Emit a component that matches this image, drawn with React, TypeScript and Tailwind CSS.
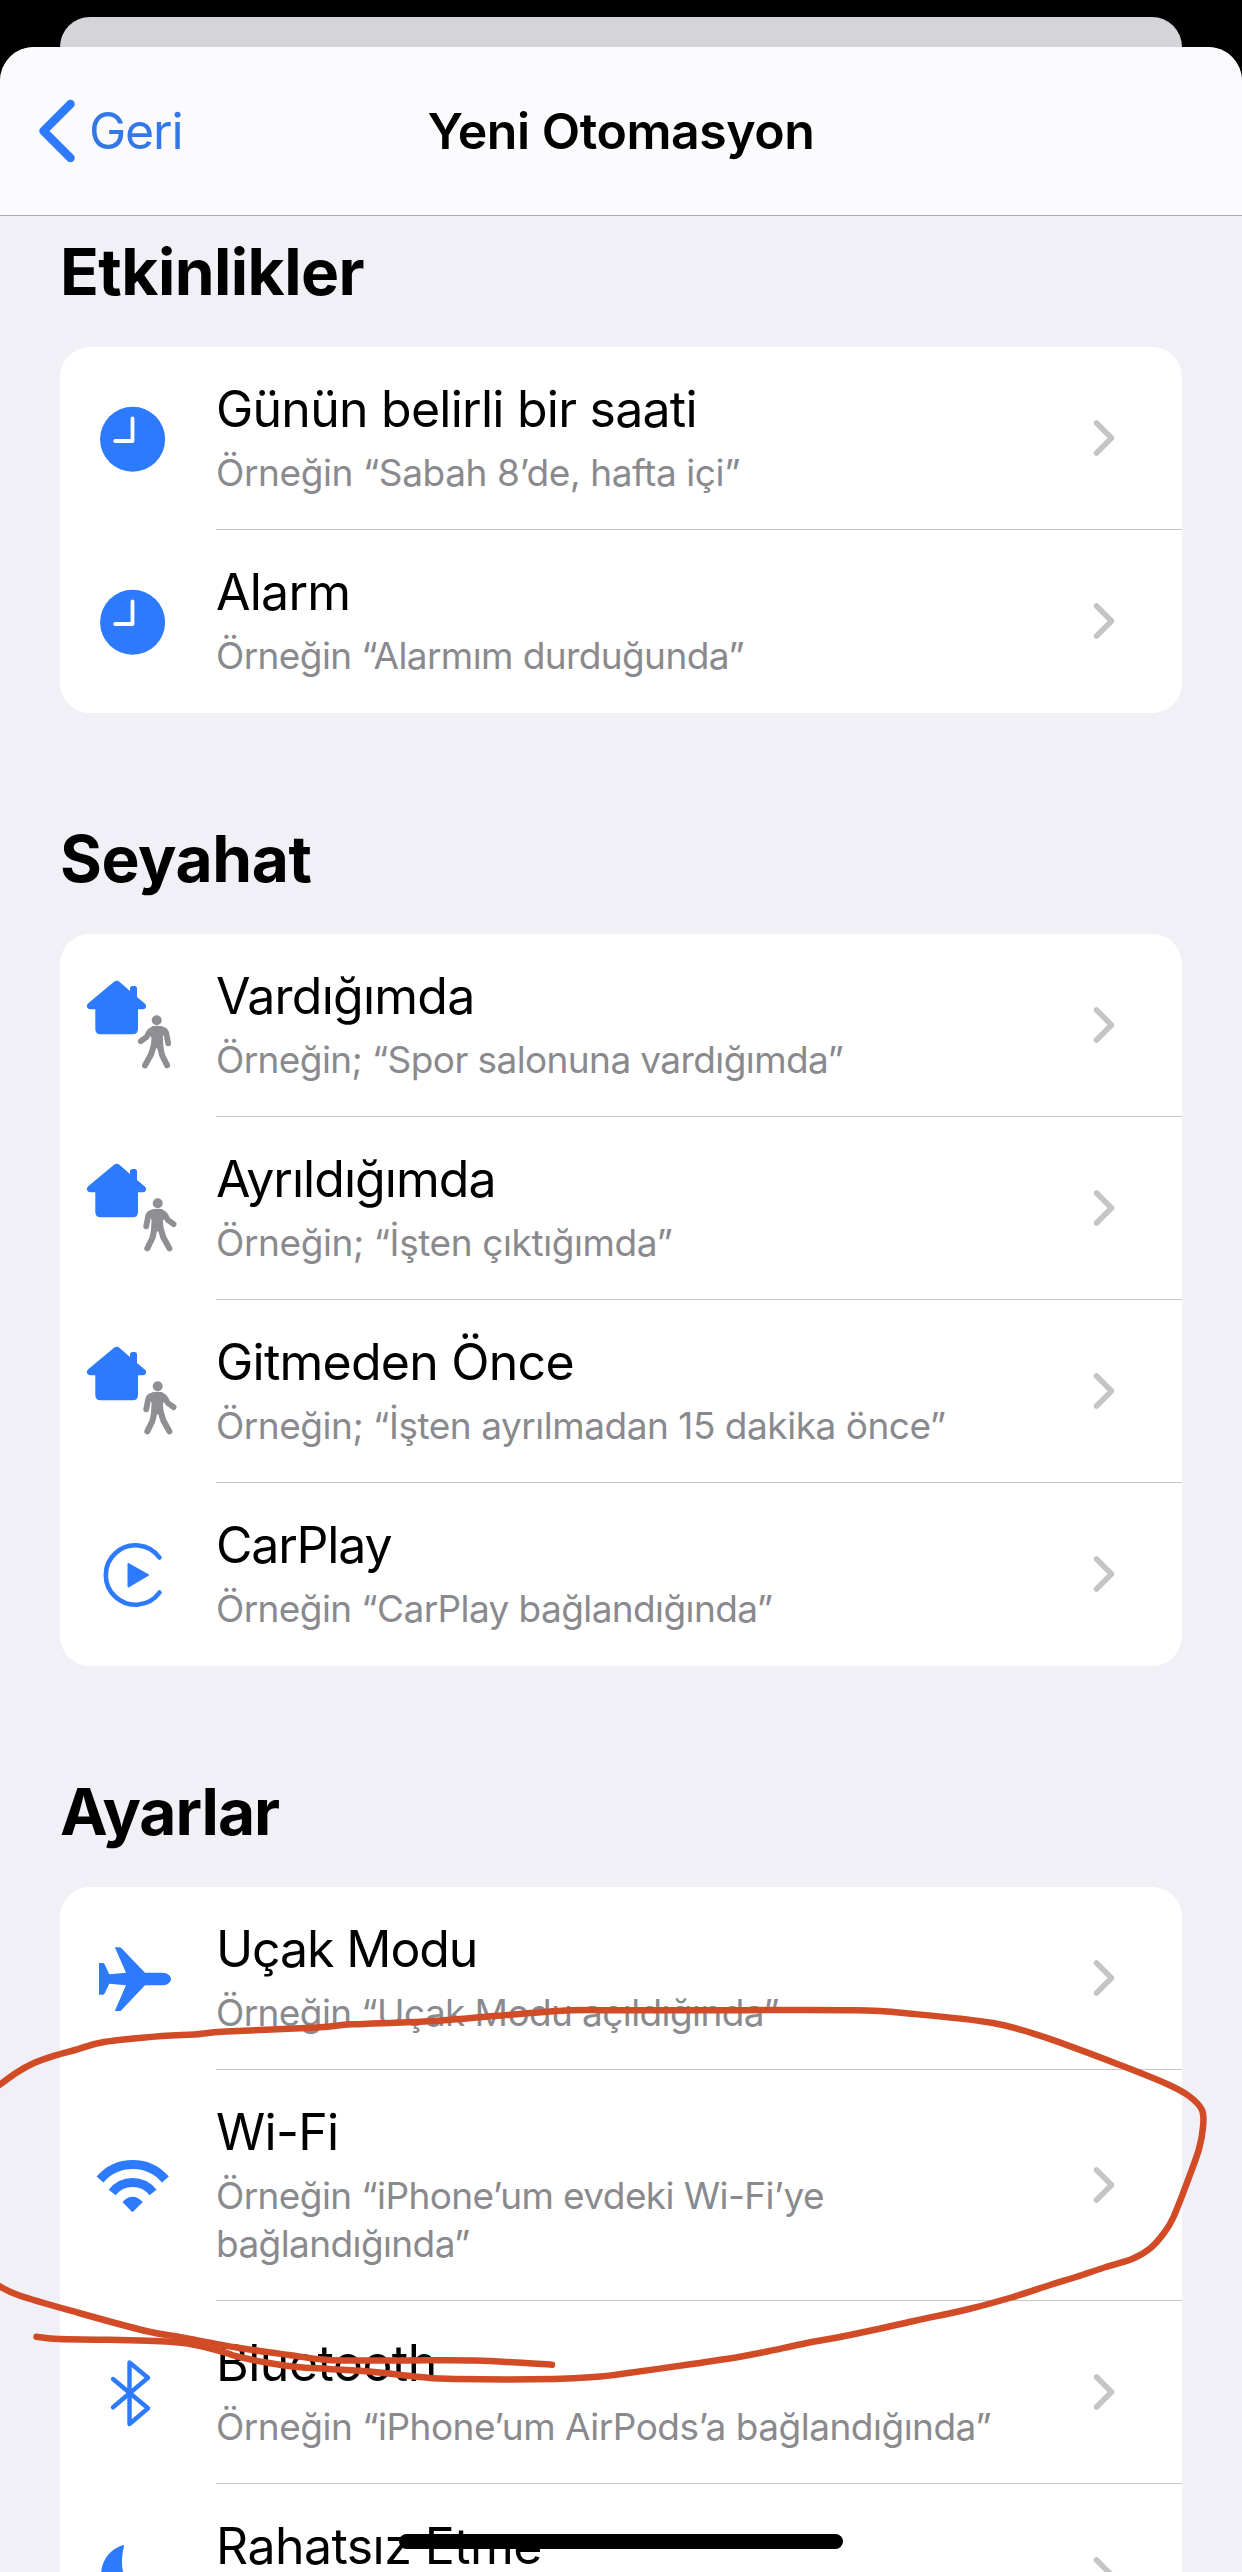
import React from 'react';

type IconName = 'clock' | 'arrive' | 'leave' | 'carplay' | 'airplane' | 'wifi' | 'bluetooth' | 'moon';

interface Trigger {
  title: string;
  titleClass?: string;
  example?: string;
  exampleClass?: string;
  icon: IconName;
}

interface Section {
  heading: string;
  headingClass: string;
  triggers: Trigger[];
}

const BLUE = '#2d7afd';

const sections: Section[] = [
  {
    heading: 'Etkinlikler',
    headingClass: 'tracking-[-0.55px]',
    triggers: [
      { title: 'Günün belirli bir saati', example: 'Örneğin “Sabah 8’de, hafta içi”', exampleClass: 'tracking-[-0.4px]', icon: 'clock' },
      { title: 'Alarm', example: 'Örneğin “Alarmım durduğunda”', icon: 'clock' },
    ],
  },
  {
    heading: 'Seyahat',
    headingClass: 'tracking-[-0.4px]',
    triggers: [
      { title: 'Vardığımda', example: 'Örneğin; “Spor salonuna vardığımda”', icon: 'arrive' },
      { title: 'Ayrıldığımda', titleClass: 'tracking-[-0.95px]', example: 'Örneğin; “İşten çıktığımda”', exampleClass: 'tracking-[-0.4px]', icon: 'leave' },
      { title: 'Gitmeden Önce', example: 'Örneğin; “İşten ayrılmadan 15 dakika önce”', exampleClass: 'tracking-[-0.47px]', icon: 'leave' },
      { title: 'CarPlay', titleClass: 'tracking-[-1.2px]', example: 'Örneğin “CarPlay bağlandığında”', icon: 'carplay' },
    ],
  },
  {
    heading: 'Ayarlar',
    headingClass: 'tracking-[-1px]',
    triggers: [
      { title: 'Uçak Modu', titleClass: 'tracking-[-1.1px]', example: 'Örneğin “Uçak Modu açıldığında”', icon: 'airplane' },
      { title: 'Wi-Fi', example: 'Örneğin “iPhone’um evdeki Wi-Fi’ye bağlandığında”', icon: 'wifi' },
      { title: 'Bluetooth', titleClass: 'tracking-[-0.5px]', example: 'Örneğin “iPhone’um AirPods’a bağlandığında”', exampleClass: 'tracking-[-0.5px]', icon: 'bluetooth' },
      { title: 'Rahatsız Etme', titleClass: 'tracking-[-0.55px]', icon: 'moon' },
    ],
  },
];

const House = () => (
  <path
    d="M114 47.7Q116.7 45.6 119.4 47.7L130 57V54.500Q130 52 132.500 52H134.500Q137 52 137 54.500V63L144.800 69.500Q147 71.500 145.500 74Q144.800 75.200 142.500 75.200H138V95Q138 100.300 132.700 100.300H100.600Q95.300 100.300 95.300 95V75.200H91Q88.500 75.200 87.500 74Q85.800 71.500 88.500 69Z"
    fill={BLUE}
  />
);

const Walker = () => (
  <g fill="none" stroke="#8e8e93" strokeLinecap="round" strokeLinejoin="round">
    <circle cx="156.700" cy="86.300" r="5" fill="#8e8e93" stroke="none" />
    <path
      d="M152 92.300Q156.700 91.400 161.500 92.300L165 98L162.800 103L163.500 115H158L156.600 114L154 116H150.500L151.500 104L149 99Z"
      fill="#8e8e93"
      stroke="none"
    />
    <path d="M153 95.200Q150.500 95.800 149 98.500L146.600 103L140.800 107.200" strokeWidth="5.800" />
    <path d="M161 95.200Q165 95.800 166.200 99L168.200 109.400" strokeWidth="5.800" />
    <path d="M153.700 112L151 120.500L145 131.400" strokeWidth="6" />
    <path d="M160 112L162 121L167.100 131.400" strokeWidth="6" />
  </g>
);

const RowIcon: React.FC<{ name: IconName }> = ({ name }) => (
  <svg width="156" height="182" viewBox="60 0 156 182" className="shrink-0">
    {name === 'clock' && (
      <>
        <circle cx="132.600" cy="92.300" r="32.500" fill={BLUE} />
        <path d="M132.500 71.500V94H115.200" fill="none" stroke="#fff" strokeWidth="3.800" strokeLinecap="round" strokeLinejoin="round" />
      </>
    )}
    {name === 'arrive' && (
      <>
        <House />
        <Walker />
      </>
    )}
    {name === 'leave' && (
      <>
        <House />
        <g transform="translate(314.400 0) scale(-1 1)">
          <Walker />
        </g>
      </>
    )}
    {name === 'carplay' && (
      <>
        <path d="M159.500 74.500A29.700 29.700 0 1 0 159.500 109.500" fill="none" stroke={BLUE} strokeWidth="4.600" strokeLinecap="round" />
        <path d="M128.500 81L148 92L128.500 103.500Z" fill={BLUE} stroke={BLUE} strokeWidth="2" strokeLinejoin="round" />
      </>
    )}
    {name === 'airplane' && (
      <path
        d="M114.800 60.300H119.500Q121 60.300 122 61.800L145 85.700H162.400C167.500 85.700 171 88.800 171 92C171 95.200 167.500 98.300 162.400 98.300H145L122 122.500Q121 124 119.500 124H114.800L126 98.300L109.300 96.700L104.600 106.500Q104 107.700 102.800 107.700H99V76H102.800Q104 76 104.600 77.200L109.300 87.300L126 85.700Z"
        fill={BLUE}
      />
    )}
    {name === 'wifi' && (
      <>
        <path d="M100 85.500A43 43 0 0 1 165.400 85.500" fill="none" stroke={BLUE} strokeWidth="9" />
        <path d="M112.200 98.500A25.800 25.800 0 0 1 153 98.500" fill="none" stroke={BLUE} strokeWidth="8.800" />
        <path d="M122.400 108Q132.500 97.500 142.800 108L133.600 117.300Q132.500 118.300 131.400 117.300Z" fill={BLUE} />
      </>
    )}
    {name === 'bluetooth' && (
      <path
        d="M113 78L148 107.300L129.500 123V61.500L148 76.700L113 106.300"
        fill="none"
        stroke={BLUE}
        strokeWidth="4.400"
        strokeLinecap="round"
        strokeLinejoin="round"
      />
    )}
    {name === 'moon' && (
      <path
        d="M122.800 61C109 66 101 77 101 92C101 111 114 125 133 125C146 125 158 118 163 104C140 111 122 101 122 79C122 71 123 67 123.900 62.500Q124 60.500 122.800 61Z"
        fill={BLUE}
      />
    )}
  </svg>
);

const Chevron = () => (
  <svg width="22" height="36" viewBox="0 0 22 36" className="mr-[67px] shrink-0">
    <path d="M3.500 3L18.500 18L3.500 33" fill="none" stroke="#c4c4c6" strokeWidth="5.500" strokeLinecap="round" strokeLinejoin="round" />
  </svg>
);

const TriggerRow: React.FC<{ trigger: Trigger }> = ({ trigger }) => (
  <div className="group flex items-stretch">
    <div className="flex items-center border-b border-transparent">
      <RowIcon name={trigger.icon} />
    </div>
    <div className="flex flex-1 flex-col border-b border-[#c6c6c8] group-last:border-transparent">
      <div className="flex min-h-[182px] flex-1 items-center justify-between">
        <div className="flex max-w-[800px] flex-col gap-[13px] self-start pt-[35px] pb-8">
          <div className={`text-[50px] leading-[54px] text-black ${trigger.titleClass ?? 'tracking-[-0.75px]'}`}>{trigger.title}</div>
          {trigger.example && (
            <div className={`text-[37px] leading-[48px] text-[#8a8a8e] ${trigger.exampleClass ?? 'tracking-[-0.6px]'}`}>
              {trigger.example}
            </div>
          )}
        </div>
        <Chevron />
      </div>
    </div>
  </div>
);

type Point = [number, number];

const toPath = (pts: Point[]) =>
  pts.slice(1).reduce((d, p, i) => {
    const p0 = pts[i - 1] ?? pts[i];
    const p1 = pts[i];
    const p3 = pts[i + 2] ?? p;
    return `${d}C${p1[0] + (p[0] - p0[0]) / 6} ${p1[1] + (p[1] - p0[1]) / 6} ${p[0] - (p3[0] - p1[0]) / 6} ${p[1] - (p3[1] - p1[1]) / 6} ${p[0]} ${p[1]}`;
  }, `M${pts[0][0]} ${pts[0][1]}`);

const strokes: Point[][] = [
  [
    [-6, 2089], [16, 2073], [34, 2063], [55, 2055.500], [75, 2050], [104, 2042], [162, 2036], [194, 2034.500], [226, 2031.500], [317, 2027.500],
    [352, 2024.300], [424, 2021.500], [495, 2016], [566, 2010.500], [621, 2010.300], [700, 2010.300], [854, 2010.300], [914, 2014],
    [993, 2023], [1043, 2036.700], [1120, 2065], [1167, 2084], [1189, 2096], [1202, 2110], [1203, 2127],
    [1199, 2149], [1188, 2180], [1173.500, 2217], [1164, 2233], [1150, 2248.500], [1132, 2259], [1106, 2267],
    [1076, 2277], [1050, 2285], [1013, 2297], [969, 2309], [914, 2321], [850, 2335], [807, 2343], [767, 2351.500],
    [740, 2356.700], [692, 2364], [621, 2374], [600, 2376.500], [554, 2379], [455, 2379], [420, 2377], [372, 2371.700],
    [329, 2369], [297, 2367], [269, 2363], [238, 2356.700], [222, 2351.500], [194, 2344.700], [170, 2341.700], [107, 2339.700],
    [59, 2339], [36.500, 2336.700],
  ],
  [
    [-6, 2283], [18, 2295], [79, 2313], [146, 2331], [182, 2337.500], [238, 2347.700], [289, 2355], [329, 2360],
    [400, 2360.500], [475, 2360.500], [552, 2364.700],
  ],
];

const Markup = () => (
  <svg viewBox="0 0 1242 2572" className="pointer-events-none absolute inset-0 h-full w-full">
    {strokes.map((pts, i) => (
      <path key={i} d={toPath(pts)} fill="none" stroke="#d14b26" strokeWidth="6.500" strokeLinecap="round" strokeLinejoin="round" />
    ))}
  </svg>
);

export default function App() {
  return (
    <div className="relative flex h-[2572px] w-[1242px] flex-col overflow-hidden bg-black pt-[17px] font-['Inter','Liberation_Sans',sans-serif]">
      <div className="mx-[60px] h-[30px] shrink-0 rounded-t-[30px] bg-[#d5d4d9]" />

      <div className="flex min-h-0 flex-1 flex-col overflow-hidden rounded-t-[34px] bg-[#f1f0f6]">
        <header className="grid h-[169px] shrink-0 grid-cols-3 items-center border-b border-[#a9a8ae] bg-[#fbfbfe]">
          <button className="flex items-center gap-[13px] pl-[38px] text-left text-[50px] leading-[60px] tracking-[-1.2px] text-[#3478e8]">
            <svg width="38" height="64" viewBox="0 0 38 64">
              <path d="M32.500 5L5.500 32L32.500 59" fill="none" stroke={BLUE} strokeWidth="8.500" strokeLinecap="round" strokeLinejoin="round" />
            </svg>
            Geri
          </button>
          <h1 className="text-center text-[50px] leading-[60px] font-semibold tracking-[-0.45px] whitespace-nowrap text-black">
            Yeni Otomasyon
          </h1>
        </header>

        <main className="flex flex-col gap-[106px] px-[60px] pt-4">
          {sections.map((section) => (
            <section key={section.heading}>
              <h2 className={`pb-[35px] text-[64px] leading-[80px] font-bold text-black ${section.headingClass}`}>{section.heading}</h2>
              <div className="overflow-hidden rounded-[30px] bg-white">
                {section.triggers.map((trigger) => (
                  <TriggerRow key={trigger.title} trigger={trigger} />
                ))}
              </div>
            </section>
          ))}
        </main>
      </div>

      <Markup />
      <div className="absolute bottom-[23px] left-[399px] h-[15px] w-[444px] rounded-full bg-black" />
    </div>
  );
}
